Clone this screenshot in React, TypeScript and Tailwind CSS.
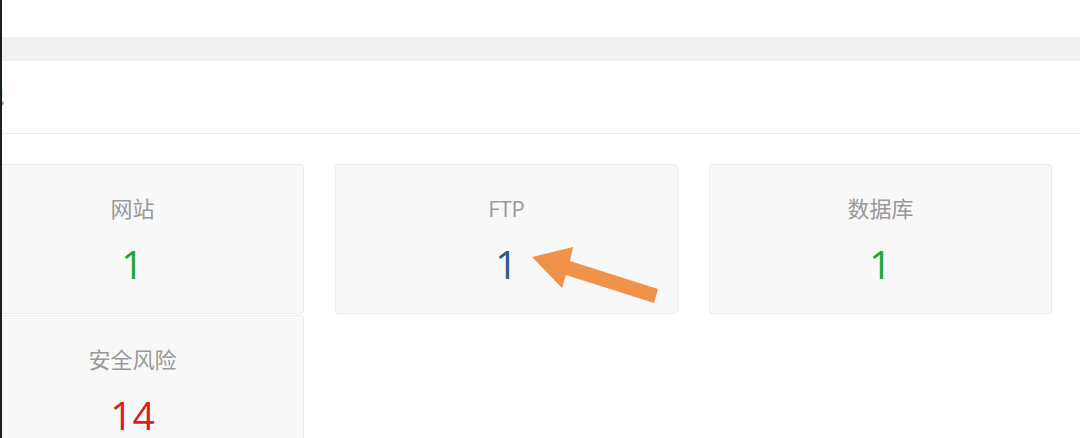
import React from "react";

const font = { fontFamily: '"Open Sans", "Noto Sans", "Noto Sans CJK SC", sans-serif' };

function Card({ label, value, color }: { label: string; value: string; color: string }) {
  return (
    <div className="h-[150px] w-[343px] rounded-[3px] border border-[#ececec] bg-[#f8f8f8] flex flex-col items-center pt-[28px]">
      <div className="text-[22px] leading-[30px] text-[#999]">{label}</div>
      <div className={`mt-[18px] text-[39px] leading-[46px] ${color}`}>{value}</div>
    </div>
  );
}

export default function App() {
  return (
    <div className="relative w-[1080px] h-[438px] overflow-hidden bg-white border-l-2 border-[#1e1e1e]" style={font}>
      <div className="h-[37px] bg-white" />
      <div className="h-[24px] bg-[#f0f0f0]" />
      <div className="h-[73px] border-b border-[#ececec] flex items-center">
        <span className="-ml-[16px] text-[18px] text-[#888]">况</span>
      </div>
      <div className="pt-[30px] -ml-[41px]">
        <div className="grid grid-cols-[343px_343px_343px] gap-x-[31px] gap-y-[1px]">
          <Card label="网站" value="1" color="text-[#20a53a]" />
          <Card label="FTP" value="1" color="text-[#2c5a84]" />
          <Card label="数据库" value="1" color="text-[#20a53a]" />
          <Card label="安全风险" value="14" color="text-[#dc1d1d]" />
        </div>
      </div>
      <svg className="absolute left-[-2px] top-0 pointer-events-none" width="1080" height="438" viewBox="0 0 1080 438">
        <polygon points="532,257 573,247 570,261 658,289 654,303 566,275 562,288" fill="#f0924a" />
      </svg>
    </div>
  );
}
